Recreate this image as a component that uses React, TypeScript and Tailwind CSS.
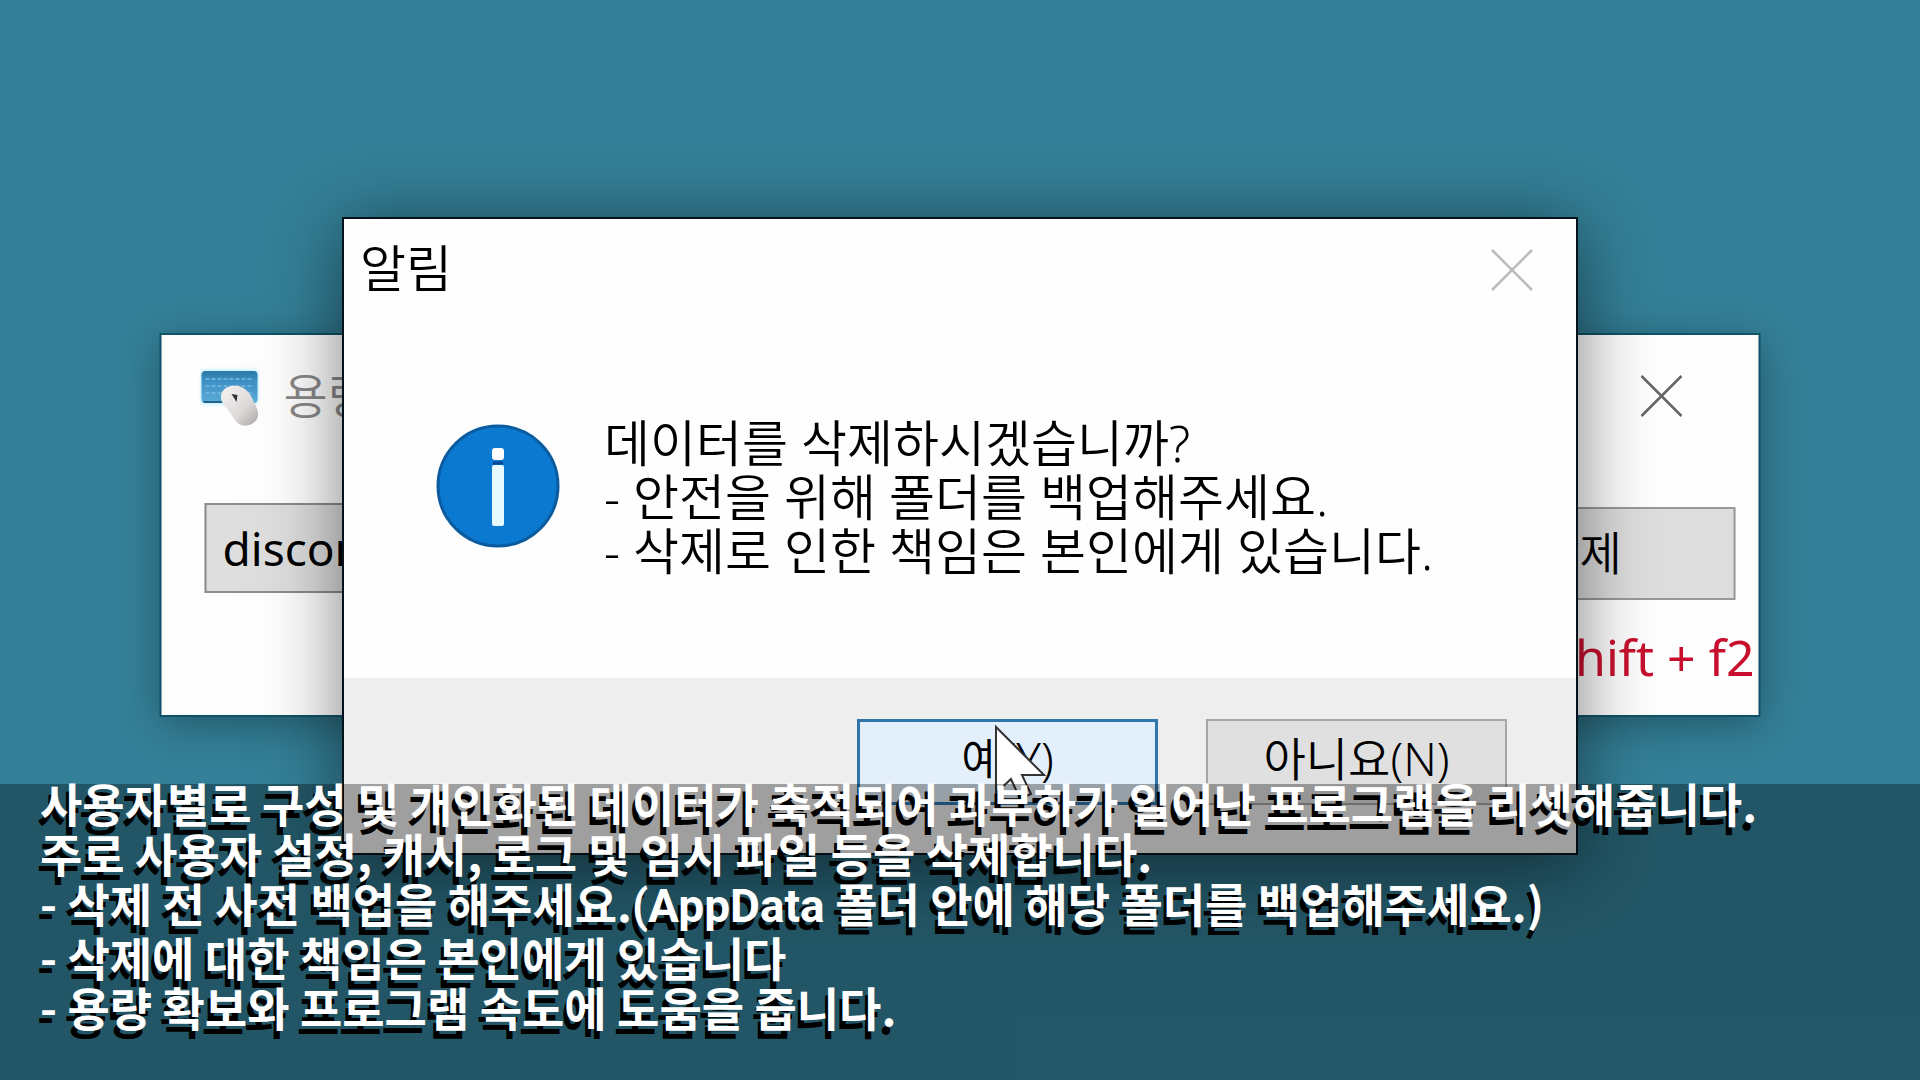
import type { ReactNode } from 'react'

const captionLines: Array<ReactNode> = [
  '사용자별로 구성 및 개인화된 데이터가 축적되어 과부하가 일어난 프로그램을 리셋해줍니다.',
  '주로 사용자 설정, 캐시, 로그 및 임시 파일 등을 삭제합니다.',
  <>
    - 삭제 전 사전 백업을 해주세요.<span className="font-[Roboto,sans-serif]">(AppData</span> 폴더 안에 해당 폴더를 백업해주세요.)
  </>,
  '- 삭제에 대한 책임은 본인에게 있습니다',
  '- 용량 확보와 프로그램 속도에 도움을 줍니다.'
]

const messageLines = [
  '데이터를 삭제하시겠습니까?',
  '- 안전을 위해 폴더를 백업해주세요.',
  '- 삭제로 인한 책임은 본인에게 있습니다.'
]

type CloseButtonProps = {
  className: string
}

function CloseButton({ className }: CloseButtonProps) {
  return (
    <button type="button" aria-label="닫기" className={className}>
      <svg viewBox="0 0 42 42" className="size-[42px]" fill="none" stroke="currentColor" strokeWidth="2.5">
        <path d="M1 1 41 41M41 1 1 41" />
      </svg>
    </button>
  )
}

function KeyboardMouseIcon() {
  return (
    <svg viewBox="0 0 60 62" className="h-[62px] w-[60px] shrink-0" aria-hidden="true">
      <defs>
        <linearGradient id="keys" x1="0" y1="0" x2="0" y2="1">
          <stop offset="0" stopColor="#2b79a5" />
          <stop offset="0.3" stopColor="#3d90c4" />
          <stop offset="1" stopColor="#5cabd8" />
        </linearGradient>
        <linearGradient id="mouse" x1="0" y1="0" x2="1" y2="1">
          <stop offset="0" stopColor="#f6f4f3" />
          <stop offset="0.6" stopColor="#dddad9" />
          <stop offset="1" stopColor="#aaa7a7" />
        </linearGradient>
        <filter id="glow" x="-20%" y="-30%" width="140%" height="160%">
          <feGaussianBlur stdDeviation="2" />
        </filter>
      </defs>
      <rect x="1" y="5" width="58" height="34" rx="4" fill="#b8ecff" filter="url(#glow)" />
      <rect x="2" y="6" width="56" height="32" rx="4" fill="url(#keys)" />
      <path d="M6 14h48M6 21h48M6 28h48" stroke="#79bbe0" strokeWidth="1.5" strokeDasharray="4 2" />
      <path d="M4 37h24" stroke="#25628c" strokeWidth="2" />
      <path
        d="M22 28c3-7 13-9 20-6 6 3 9 7 12 14 4 8 7 14 2 20-5 6-14 6-19 1-4-4-6-10-10-14-4-4-7-9-5-15z"
        fill="url(#mouse)"
      />
      <path d="m32 29 6 1-1 7z" fill="#333" />
    </svg>
  )
}

function InfoIcon() {
  return (
    <svg viewBox="0 0 124 124" className="size-[124px] shrink-0" role="img" aria-label="정보">
      <circle cx="62" cy="62" r="60" fill="#0b79d0" stroke="#0a5c9f" strokeWidth="3" />
      <rect x="56" y="24" width="12" height="12" rx="3" fill="#fff" />
      <path d="M57 39h10" stroke="#04489a" strokeWidth="3" />
      <rect x="56" y="41" width="12" height="61" rx="2" fill="#e8f8ff" />
    </svg>
  )
}

function Cursor() {
  return (
    <svg viewBox="0 0 52 76" className="absolute top-0.5 left-1/2 ml-[-14px] h-[76px] w-[52px]" aria-hidden="true">
      <path d="M2 3v66l15-14 9 20 11-5-9-19h22z" fill="#fff" stroke="#333" strokeWidth="2" />
    </svg>
  )
}

function DialogButton({ className, children }: { className: string; children: ReactNode }) {
  return (
    <button type="button" className={`relative h-[86px] w-[301px] pb-2 text-[46px] leading-none ${className}`}>
      {children}
    </button>
  )
}

function CleanerWindow() {
  return (
    <section className="absolute top-[335px] left-1/2 flex h-[380px] w-[1597px] -translate-x-1/2 flex-col bg-[#fefefe] shadow-[0_0_0_2px_#0d5266,0_8px_40px_rgba(0,0,0,0.35)]">
      <header className="flex items-center pt-[30px] pr-[76px] pl-[38px]">
        <KeyboardMouseIcon />
        <h1 className="grow pl-6 text-[48px] leading-[58px] text-[#888]">용량 확보</h1>
        <CloseButton className="text-[#666]" />
      </header>
      <div className="flex items-start justify-between pt-[76px] pr-[23px] pl-[43px]">
        <button
          type="button"
          className="h-[90px] w-[600px] border-2 border-[#8c8c8c] bg-[#dedede] pl-4 text-left text-[46px] leading-none font-normal text-black"
        >
          discord
        </button>
        <button
          type="button"
          className="mt-1 h-[93px] w-[312px] border-2 border-[#999] bg-[#dedede] pb-1 text-[46px] leading-none text-black"
        >
          삭제
        </button>
      </div>
      <p className="mt-7 pr-1 text-right text-[50px] leading-[58px] font-normal text-[#c8102e]">shift + f2</p>
    </section>
  )
}

function ConfirmDialog() {
  return (
    <section
      role="dialog"
      aria-labelledby="confirm-title"
      className="absolute top-[217px] left-1/2 flex w-[1236px] -translate-x-1/2 flex-col border-2 border-[#04121c] bg-[#fefefe] shadow-[0_8px_70px_rgba(0,0,0,0.5)]"
    >
      <header className="flex items-start justify-between pt-5 pr-[43px] pl-4">
        <h2 id="confirm-title" className="text-[50px] leading-[58px] text-black">
          알림
        </h2>
        <CloseButton className="mt-[10px] text-[#bbb]" />
      </header>
      <div className="flex h-[381px] items-start gap-11 pt-[119px] pl-[92px]">
        <div className="pt-2">
          <InfoIcon />
        </div>
        <div className="text-[50px] leading-[54px] whitespace-nowrap text-black">
          {messageLines.map((line) => (
            <p key={line}>{line}</p>
          ))}
        </div>
      </div>
      <footer className="flex justify-end gap-[48px] bg-[#eee] pt-[41px] pr-[69px] pb-[48px]">
        <DialogButton className="border-[3px] border-[#2f76ad] bg-[#e3effa]">
          예(Y)
          <Cursor />
        </DialogButton>
        <DialogButton className="border-2 border-[#a5a5a5] bg-[#e0e0e0]">아니요(N)</DialogButton>
      </footer>
    </section>
  )
}

function Caption() {
  return (
    <div className="absolute inset-x-0 bottom-0 flex h-[296px] flex-col bg-black/33 px-10 font-['Noto_Sans_CJK_KR',sans-serif] text-[46px] leading-[50px] font-bold whitespace-nowrap text-white [text-shadow:-3px_8px_0_#000]">
      <div className="-mt-[7px]">
        {captionLines.map((line, i) => (
          <p key={i}>{line}</p>
        ))}
      </div>
    </div>
  )
}

export default function App() {
  return (
    <main className="relative h-screen overflow-hidden bg-[#348098] font-['Noto_Sans','Noto_Sans_CJK_KR',sans-serif] font-[350]">
      <CleanerWindow />
      <ConfirmDialog />
      <Caption />
    </main>
  )
}
